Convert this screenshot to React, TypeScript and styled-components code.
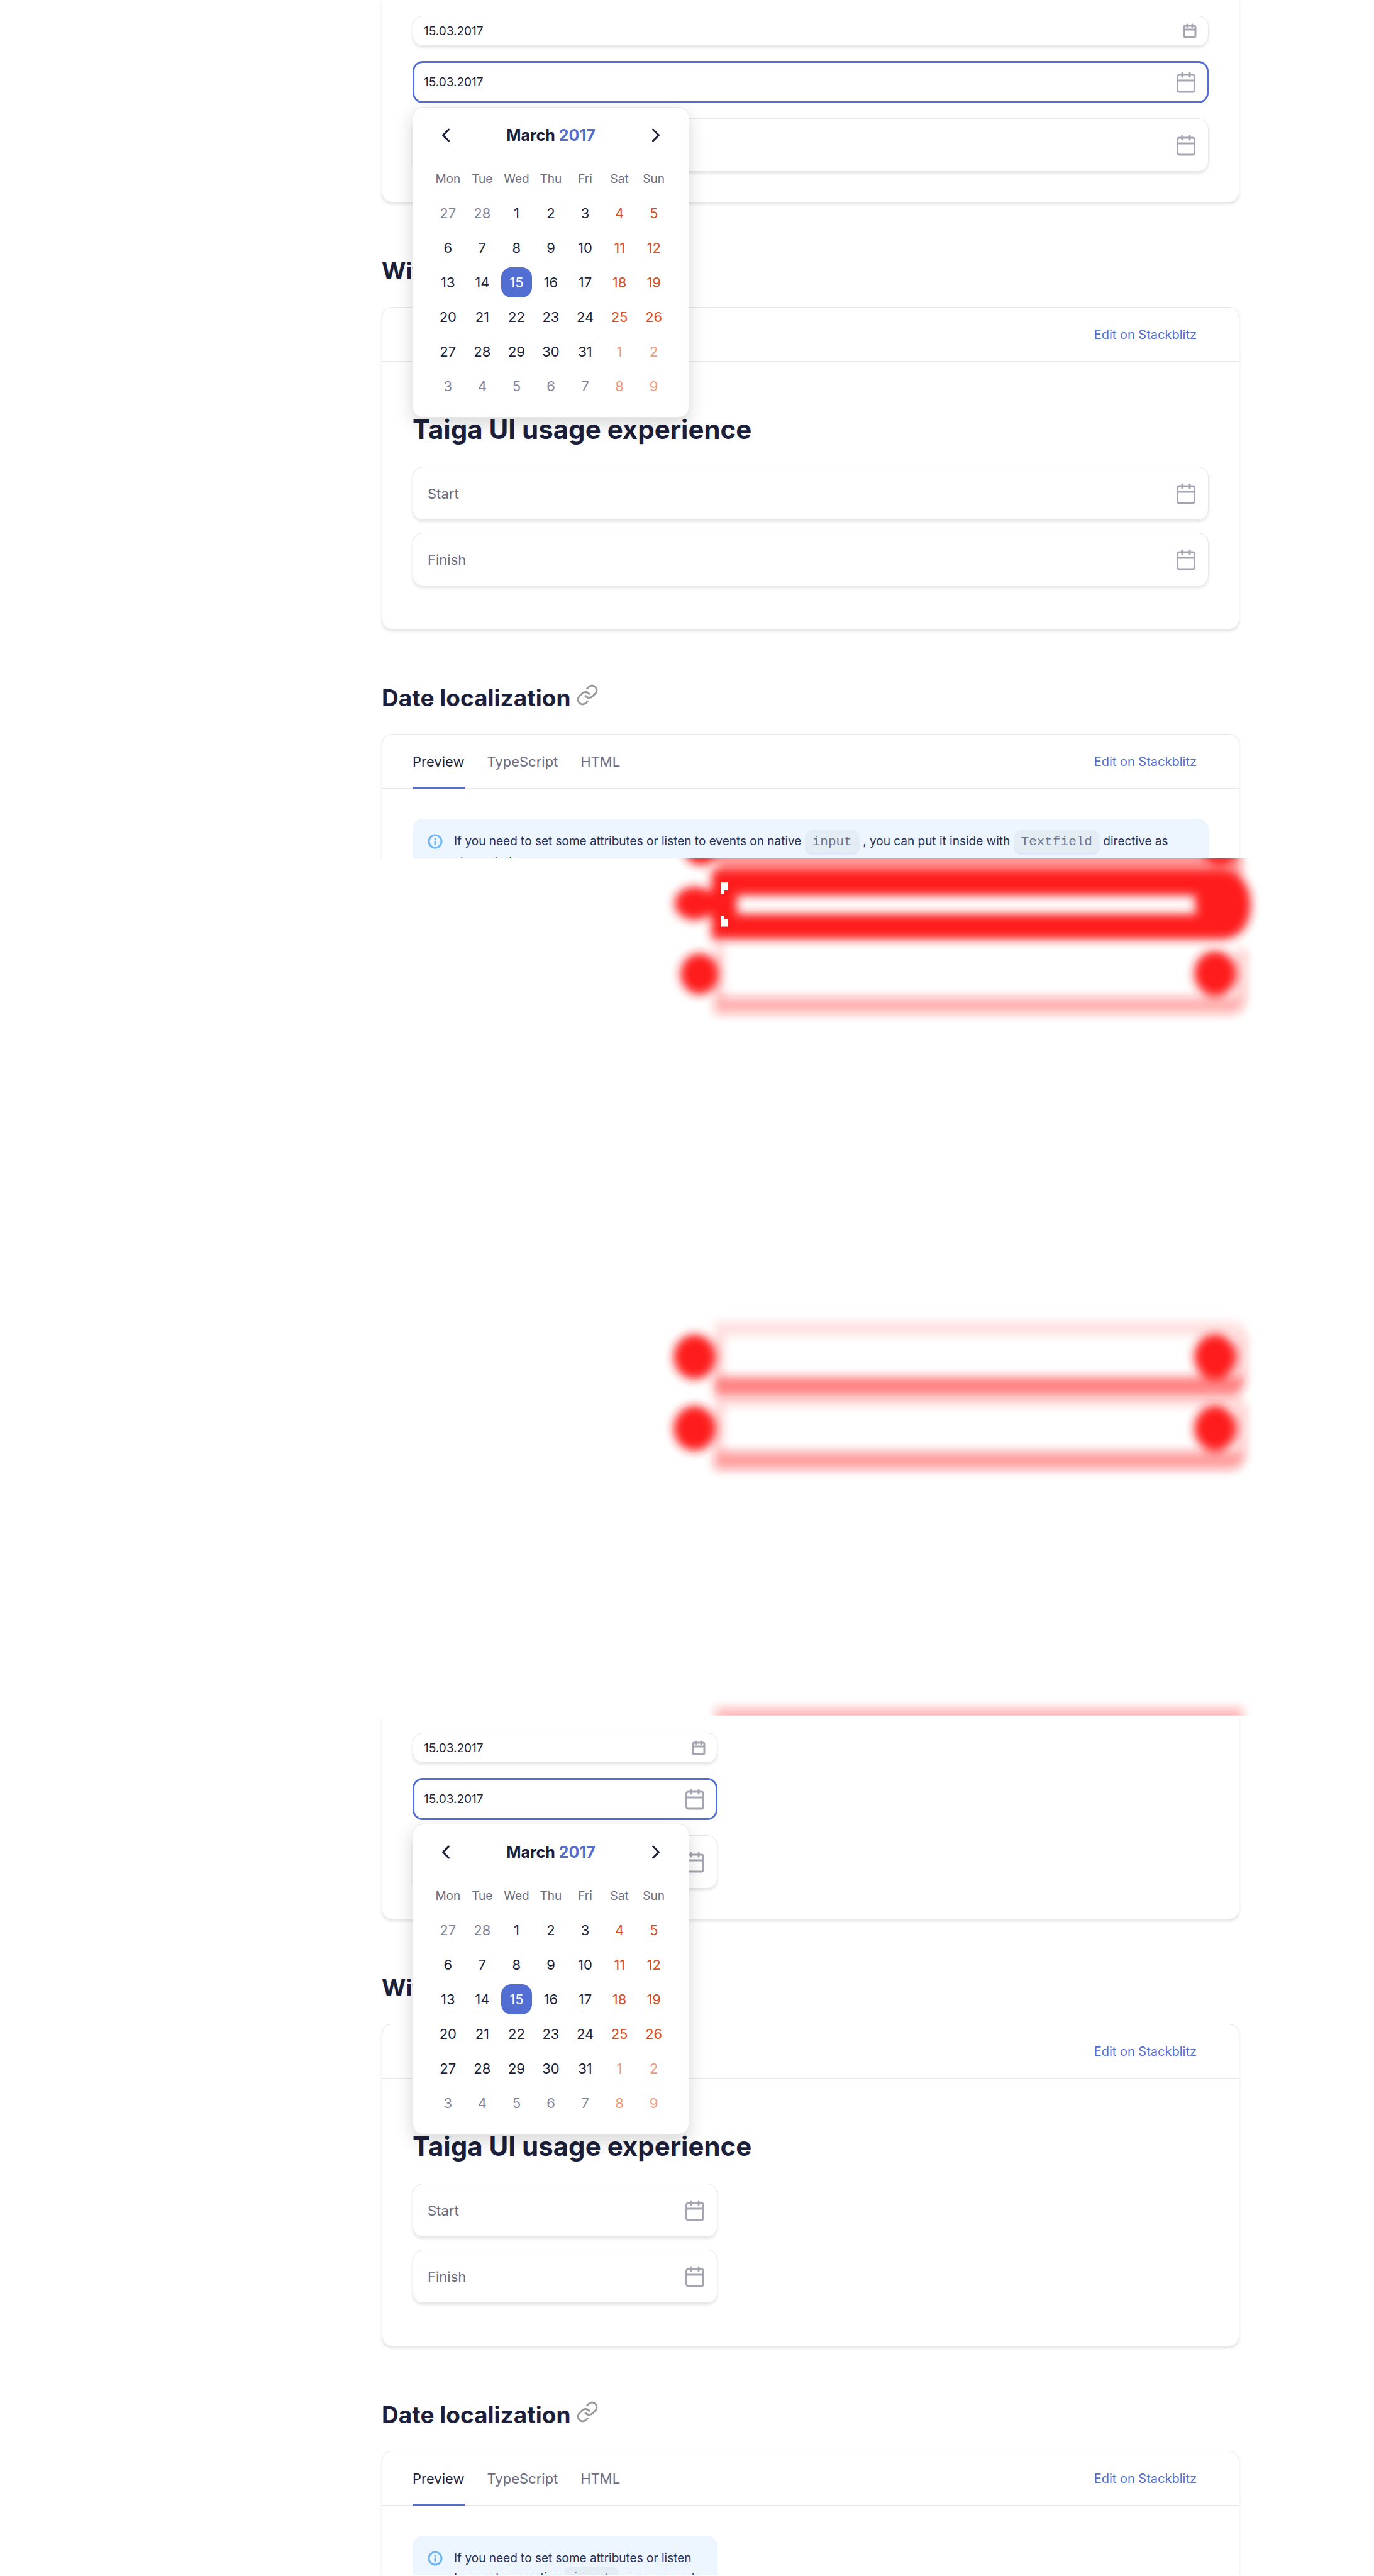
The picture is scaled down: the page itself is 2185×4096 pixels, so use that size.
import React from 'react';
import styled, { createGlobalStyle, css } from 'styled-components';
import { Calendar, ChevronLeft, ChevronRight, Info, Link } from 'lucide-react';

const color = {
  text: '#1b1f3b',
  secondary: '#6b6c80',
  muted: '#83849a',
  icon: '#a4a4b2',
  line: '#e7e7e7',
  primary: '#526ed3',
  weekend: '#dd4c1e',
  weekendMuted: '#ee9b80',
};

const GlobalStyle = createGlobalStyle`
  *, *::before, *::after { box-sizing: border-box; }
  body {
    margin: 0;
    background: #fff;
    color: ${color.text};
    font-family: Inter, "Liberation Sans", sans-serif;
    font-size: 22px;
  }
  button, input { font: inherit; color: inherit; }
`;

const Page = styled.main`
  display: grid;
`;

const Frame = styled.section`
  aspect-ratio: 2185 / 1365;
  min-width: 0;
  overflow: hidden;
  background: #fff;
`;

const Article = styled.div`
  padding: 0 214px 0 607px;
`;

const Card = styled.div<{ $bleed?: boolean }>`
  border: 1px solid ${color.line};
  border-radius: 16px;
  background: #fff;
  box-shadow: 0 3px 4px rgba(0, 0, 0, 0.1);
  ${(p) =>
    p.$bleed &&
    css`
      border-top: 0;
      border-top-left-radius: 0;
      border-top-right-radius: 0;
    `}
`;

const CardHeader = styled.header`
  display: flex;
  align-items: center;
  height: 86px;
  padding: 0 67px 0 48px;
  border-bottom: 1px solid ${color.line};
`;

const Tabs = styled.nav`
  display: flex;
  align-self: stretch;
  gap: 36px;
  margin-bottom: -1px;
`;

const Tab = styled.button<{ $active?: boolean }>`
  padding: 3px 0 0;
  border: 0;
  border-bottom: 3px solid ${(p) => (p.$active ? color.primary : 'transparent')};
  background: none;
  color: ${(p) => (p.$active ? color.text : color.secondary)};
`;

const EditLink = styled.a`
  margin-left: auto;
  color: ${color.primary};
  font-size: 20px;
  text-decoration: none;
`;

const Sizes = styled.div`
  display: grid;
  gap: 24px;
  padding: 25px 48px 48px;
`;

const Form = styled.form`
  display: grid;
  gap: 20px;
  padding: 83px 48px 68px;
`;

const FormTitle = styled.h1`
  margin: 0 0 14px;
  font-size: 42px;
  line-height: 50px;
`;

const SectionTitle = styled.h2`
  margin: 86px 0 34px;
  font-size: 37px;
  line-height: 46px;
`;

const AnchorLink = styled.a`
  color: #999;
  svg { vertical-align: baseline; }
`;

type Size = 's' | 'm' | 'l';
const fieldHeight: Record<Size, number> = { s: 48, m: 67, l: 85 };

const FieldBox = styled.div<{ $size: Size; $narrow?: boolean; $focused?: boolean }>`
  position: relative;
  display: flex;
  align-items: center;
  width: 100%;
  max-width: ${(p) => (p.$narrow ? '485px' : 'none')};
  height: ${(p) => fieldHeight[p.$size]}px;
  padding: 0 17px 0 ${(p) => (p.$size === 'l' ? 23 : 17)}px;
  border: 1px solid ${color.line};
  border-radius: 16px;
  box-shadow: 0 3px 4px rgba(0, 0, 0, 0.1);
  color: ${color.icon};
  ${(p) =>
    p.$focused &&
    css`
      padding: 0 15px;
      border: 3px solid ${color.primary};
      box-shadow: none;
    `}
`;

const FieldInput = styled.input<{ $size: Size }>`
  flex: 1;
  min-width: 0;
  padding: 0;
  border: 0;
  outline: 0;
  background: none;
  color: ${color.text};
  font-size: ${(p) => (p.$size === 'l' ? 22 : 19)}px;
  &::placeholder { color: ${color.secondary}; opacity: 1; }
`;

const Dropdown = styled.div`
  position: absolute;
  z-index: 1;
  top: 70px;
  left: -3px;
  width: 440px;
  padding: 24px 28px 22px;
  border: 1px solid ${color.line};
  border-radius: 16px;
  background: #fff;
  box-shadow: 0 10px 28px rgba(0, 0, 0, 0.16);
`;

const MonthBar = styled.div`
  display: flex;
  align-items: center;
  justify-content: space-between;
  height: 40px;
  margin-bottom: 24px;
  color: ${color.text};
  font-size: 25px;
  font-weight: 700;
`;

const ArrowButton = styled.button`
  display: grid;
  place-items: center;
  width: 48px;
  height: 40px;
  padding: 0;
  border: 0;
  background: none;
`;

const Year = styled.span`
  color: ${color.primary};
`;

const Days = styled.table`
  width: 100%;
  border-collapse: collapse;
  table-layout: fixed;
  font-size: 22px;
  line-height: 24px;
  th, td { padding: 0; text-align: center; }
  td { height: 55px; }
  th {
    height: 52px;
    color: ${color.secondary};
    font-size: 19px;
    font-weight: 400;
  }
`;

const Day = styled.button<{ $weekend: boolean; $outside: boolean; $selected: boolean }>`
  display: block;
  width: 49px;
  height: 48px;
  margin: 0 auto;
  padding: 0;
  border: 0;
  border-radius: 16px;
  background: ${(p) => (p.$selected ? color.primary : 'transparent')};
  color: ${(p) => {
    if (p.$selected) return '#fff';
    if (p.$weekend) return p.$outside ? color.weekendMuted : color.weekend;
    return p.$outside ? color.muted : color.text;
  }};
`;

const NoticeArea = styled.div`
  padding: 48px;
`;

const Notice = styled.div<{ $narrow?: boolean }>`
  display: flex;
  gap: 18px;
  max-width: ${(p) => (p.$narrow ? '485px' : 'none')};
  padding: 20px 24px;
  border-radius: 16px;
  background: #edf6fe;
  color: #70b6f6;
  svg { flex: none; margin-top: 4px; }
`;

const NoticeText = styled.p`
  margin: 0;
  color: #28305a;
  font-size: 19px;
  line-height: 31px;
`;

const Code = styled.code`
  padding: 7px 12px 9px;
  border-radius: 12px;
  background: #e5edf4;
  box-shadow: inset 0 -3px #dde7fd;
  color: #6c7590;
  font-family: "Liberation Mono", monospace;
  font-size: 21px;
`;

const HeatMap = styled.svg`
  display: block;
  width: 100%;
  height: 100%;
`;

const weekdays = ['Mon', 'Tue', 'Wed', 'Thu', 'Fri', 'Sat', 'Sun'];

// Six weeks starting on Monday, 27 February 2017.
const weeks = Array.from({ length: 6 }, (_, w) =>
  Array.from({ length: 7 }, (_, d) => {
    const date = new Date(2017, 1, 27 + w * 7 + d);
    return { day: date.getDate(), outside: date.getMonth() !== 2, weekend: d > 4 };
  }),
);

function MonthCalendar() {
  return (
    <Dropdown>
      <MonthBar>
        <ArrowButton type="button"><ChevronLeft size={36} /></ArrowButton>
        <span>March <Year>2017</Year></span>
        <ArrowButton type="button"><ChevronRight size={36} /></ArrowButton>
      </MonthBar>
      <Days>
        <thead>
          <tr>{weekdays.map((name) => <th key={name} scope="col">{name}</th>)}</tr>
        </thead>
        <tbody>
          {weeks.map((week, i) => (
            <tr key={i}>
              {week.map(({ day, outside, weekend }) => (
                <td key={day}>
                  <Day type="button" $weekend={weekend} $outside={outside} $selected={day === 15}>
                    {day}
                  </Day>
                </td>
              ))}
            </tr>
          ))}
        </tbody>
      </Days>
    </Dropdown>
  );
}

interface DateFieldProps {
  size: Size;
  narrow?: boolean;
  focused?: boolean;
  value?: string;
  placeholder?: string;
}

function DateField({ size, narrow, focused, value, placeholder }: DateFieldProps) {
  return (
    <FieldBox $size={size} $narrow={narrow} $focused={focused}>
      <FieldInput $size={size} defaultValue={value} placeholder={placeholder} aria-label={placeholder ?? 'Date'} />
      {size === 's' ? <Calendar size={24} strokeWidth={3} /> : <Calendar size={36} strokeWidth={2} />}
      {focused && <MonthCalendar />}
    </FieldBox>
  );
}

function DocPage({ narrow }: { narrow?: boolean }) {
  return (
    <Frame>
      <Article>
        <Card $bleed>
          <Sizes>
            <DateField size="s" narrow={narrow} value="15.03.2017" />
            <DateField size="m" narrow={narrow} value="15.03.2017" focused />
            <DateField size="l" narrow={narrow} />
          </Sizes>
        </Card>

        <SectionTitle>With</SectionTitle>
        <Card>
          <CardHeader>
            <EditLink href="#stackblitz">Edit on Stackblitz</EditLink>
          </CardHeader>
          <Form>
            <FormTitle>Taiga UI usage experience</FormTitle>
            <DateField size="l" narrow={narrow} placeholder="Start" />
            <DateField size="l" narrow={narrow} placeholder="Finish" />
          </Form>
        </Card>

        <SectionTitle>
          Date localization{' '}
          <AnchorLink href="#date-localization"><Link size={36} /></AnchorLink>
        </SectionTitle>
        <Card>
          <CardHeader>
            <Tabs>
              <Tab type="button" $active>Preview</Tab>
              <Tab type="button">TypeScript</Tab>
              <Tab type="button">HTML</Tab>
            </Tabs>
            <EditLink href="#stackblitz">Edit on Stackblitz</EditLink>
          </CardHeader>
          <NoticeArea>
            <Notice $narrow={narrow}>
              <Info size={24} strokeWidth={3} />
              <NoticeText>
                If you need to set some attributes or listen to events on native <Code>input</Code> , you can put
                it inside with <Code>Textfield</Code> directive as shown below:
              </NoticeText>
            </Notice>
          </NoticeArea>
        </Card>
      </Article>
    </Frame>
  );
}

function DifferenceMap() {
  return (
    <Frame>
      <HeatMap viewBox="0 0 2880 1800" preserveAspectRatio="none" aria-hidden="true">
        <defs>
          <filter id="soft" filterUnits="userSpaceOnUse" x="1300" y="-100" width="1500" height="2000">
            <feGaussianBlur stdDeviation="10" />
          </filter>
        </defs>
        <g filter="url(#soft)" fill="#ff1a1a">
          {/* faint box outlines */}
          <g>
            <rect x="1504" y="-30" width="1098" height="70" opacity="0.45" />
            <path d="M1497 290H2610Q2610 326 2577 326H1497Z" opacity="0.34" />
            <rect x="1500" y="180" width="16" height="116" opacity="0.2" />
            <rect x="2592" y="190" width="20" height="100" opacity="0.25" />
            <path d="M1497 970H2582Q2610 972 2610 1000H1497Z" opacity="0.12" />
            <rect x="1500" y="1000" width="16" height="90" opacity="0.2" />
            <rect x="2592" y="1000" width="20" height="88" opacity="0.25" />
            <path d="M1497 1087H2610Q2610 1124 2577 1124H1497Z" opacity="0.56" />
            <rect x="1500" y="1124" width="1105" height="24" opacity="0.16" />
            <rect x="1500" y="1148" width="16" height="94" opacity="0.2" />
            <rect x="2592" y="1148" width="20" height="94" opacity="0.25" />
            <path d="M1497 1243H2610Q2610 1281 2577 1281H1497Z" opacity="0.42" />
            <rect x="1500" y="1782" width="1105" height="60" opacity="0.32" />
          </g>
          {/* focused field */}
          <path
            d="M1518 51H2555Q2595 51 2595 97T2555 143H1518Z"
            fill="none"
            stroke="#ff1a1a"
            strokeWidth="53"
          />
          <rect x="1450" y="68" width="60" height="50" />
          {/* icon spots */}
          <ellipse cx="1470" cy="-22" rx="38" ry="36" />
          <ellipse cx="2557" cy="-22" rx="38" ry="36" />
          <ellipse cx="1456" cy="94" rx="42" ry="35" />
          <ellipse cx="2546" cy="94" rx="42" ry="44" />
          <ellipse cx="1466" cy="242" rx="40" ry="43" />
          <ellipse cx="2547" cy="241" rx="44" ry="47" />
          <ellipse cx="1456" cy="1045" rx="44" ry="47" />
          <ellipse cx="2547" cy="1045" rx="44" ry="47" />
          <ellipse cx="1456" cy="1195" rx="44" ry="47" />
          <ellipse cx="2547" cy="1195" rx="44" ry="47" />
        </g>
        <g fill="#fff">
          <path d="M1511 50h15v16h-8v8h-7z" />
          <path d="M1511 120h7v7h8v16h-15z" />
          <rect x="0" y="1797" width="2880" height="3" />
        </g>
      </HeatMap>
    </Frame>
  );
}

export default function App() {
  return (
    <>
      <GlobalStyle />
      <Page>
        <DocPage />
        <DifferenceMap />
        <DocPage narrow />
      </Page>
    </>
  );
}
